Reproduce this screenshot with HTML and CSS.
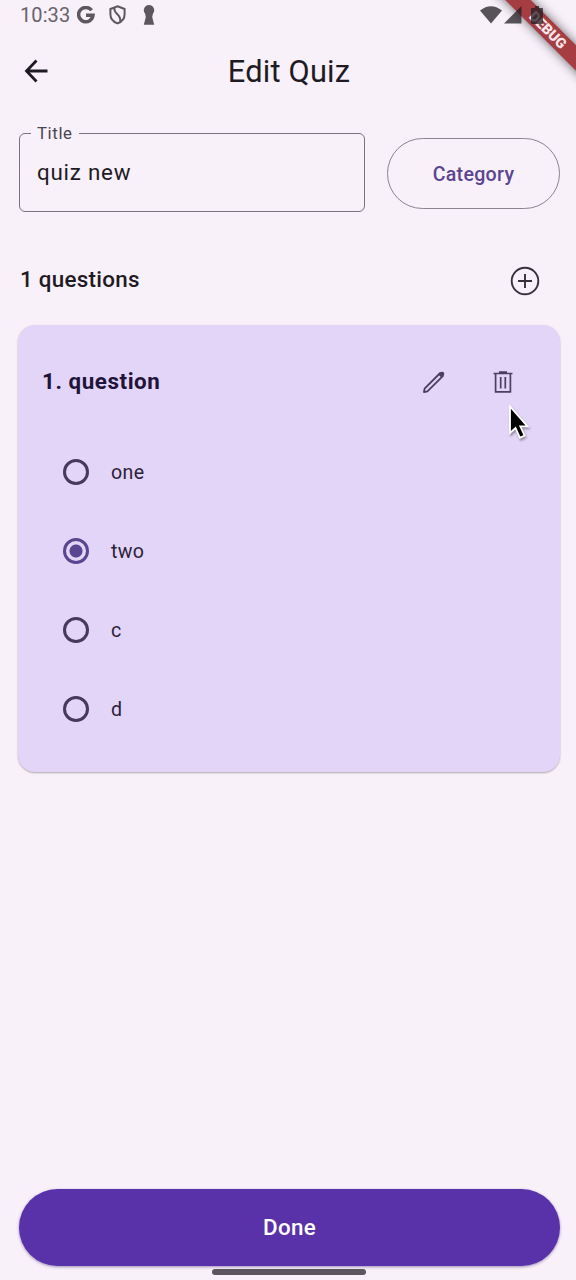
FILE: index.html
```html
<!DOCTYPE html>
<html lang="en">
<head>
<meta charset="utf-8">
<title>Edit Quiz</title>
<link rel="stylesheet" href="styles.css">
</head>
<body>
<div class="screen">
  <header class="status">
    <div class="status-left">
      <span class="clock">10:33</span>
      <svg class="google" width="18" height="18" viewBox="0 0 18 18"><path d="M14.6 4.300A7.200 7.200 0 1 0 16 9.200H9" fill="none" stroke="currentColor" stroke-width="3.500"/></svg>
      <svg class="shield" width="17" height="20" viewBox="0 0 17 20"><path d="M8.500 1.300 15.600 4v5.200c0 4-2.700 7.600-7.100 9.200-4.400-1.600-7.100-5.200-7.100-9.200V4ZM5.400 3C4.400 9.500 12.500 8.500 11.200 16.500" fill="none" stroke="currentColor" stroke-width="2"/></svg>
      <svg class="keyhole" width="12" height="20" viewBox="0 0 12 20"><path d="M6 0a5.200 5.200 0 0 1 4 8.500L9.200 12l2 7.800H.8l2-7.800L2 8.500A5.200 5.200 0 0 1 6 0Z" fill="currentColor"/></svg>
    </div>
    <div class="status-right">
      <svg width="22" height="18" viewBox="0 0 22 18"><path d="M0 4.500Q11-4 22 4.500L11 17.500Z" fill="currentColor"/></svg>
      <svg width="18" height="18" viewBox="0 0 18 18"><path d="M17.500 0v17.500H0Z" fill="currentColor"/></svg>
      <svg class="battery" width="12" height="18" viewBox="0 0 12 18"><path d="M4 0h4v2h3q1 0 1 1v14q0 1-1 1H1q-1 0-1-1V3q0-1 1-1h3Z" fill="currentColor"/></svg>
    </div>
  </header>
  <div class="debug-clip"><div class="debug">DEBUG</div></div>

  <div class="appbar">
    <svg class="back" width="24" height="24" viewBox="0 0 24 24"><path d="M12.500 1.500 2.500 12l10 10.500M2.500 12h21" fill="none" stroke="currentColor" stroke-width="2.800"/></svg>
    <h1 class="heading">Edit Quiz</h1>
  </div>

  <div class="form-row">
    <fieldset class="field">
      <legend class="field-label">Title</legend>
      <span class="field-value">quiz new</span>
    </fieldset>
    <button class="category">Category</button>
  </div>

  <div class="count-row">
    <h2 class="count">1 questions</h2>
    <svg width="30" height="30" viewBox="0 0 30 30"><path d="M15 8v14M8 15h14" stroke="currentColor" stroke-width="1.900"/><circle cx="15" cy="15" r="13.300" fill="none" stroke="currentColor" stroke-width="1.900"/></svg>
  </div>

  <section class="card">
    <div class="card-head">
      <h3 class="question">1. question</h3>
      <svg class="edit" width="24" height="24" viewBox="0 0 24 24"><path d="M2 22 2.600 18.600 18.200 3 21 5.800 5.400 21.400Z" fill="none" stroke="currentColor" stroke-width="1.800" stroke-linejoin="round"/><path d="m16.300 4.500 2.300-2.200c2.100-2 5.100 1 3 3l-2.300 2.300Z" fill="currentColor"/></svg>
      <svg class="trash" width="20" height="22" viewBox="0 0 20 22"><path d="M.5 2.500h19M6 1.200h8M2.600 2.500v18.300h14.800V2.500M7.700 6v11.500M12.300 6v11.500" fill="none" stroke="currentColor" stroke-width="1.700"/></svg>
    </div>
    <ul class="options">
      <li class="option"><span class="radio"></span><span class="option-text">one</span></li>
      <li class="option"><span class="radio radio-on"></span><span class="option-text">two</span></li>
      <li class="option"><span class="radio"></span><span class="option-text">c</span></li>
      <li class="option"><span class="radio"></span><span class="option-text">d</span></li>
    </ul>
  </section>

  <footer class="footer">
    <button class="done">Done</button>
    <div class="nav-handle"></div>
  </footer>

  <svg class="cursor" width="26" height="36" viewBox="0 0 26 36"><path d="M2 1.500v26.500l5.500-5 4.300 9.700 4.700-2.200-4.200-9.200h7.200Z" fill="#000" stroke="#fff" stroke-width="1.800"/></svg>
</div>
</body>
</html>
```
FILE: styles.css
```css
* { box-sizing: border-box; }
body { margin: 0; }
h1, h2, h3, ul { margin: 0; padding: 0; }
svg { display: block; flex: none; }
button { font-family: inherit; padding: 0; }

.screen {
  position: relative;
  display: flex;
  flex-direction: column;
  width: 576px;
  height: 1280px;
  overflow: hidden;
  background: #f8f1fa;
  color: #1f1b24;
  font-family: Roboto, "Liberation Sans", sans-serif;
}

.status {
  position: relative;
  z-index: 3;
  display: flex;
  justify-content: space-between;
  height: 34px;
  padding: 0 33px 0 20px;
  color: #5d575e;
}
.status-left, .status-right { display: flex; align-items: center; height: 30px; }
.clock { width: 57px; font-size: 20px; letter-spacing: 0.1px; color: #69636b; }
.shield { margin-left: 14px; }
.keyhole { margin-left: 17px; }
.status-right { gap: 2px; height: 29px; color: rgba(35, 29, 35, 0.75); }
.battery { margin-left: 7px; }

.debug-clip {
  position: absolute;
  z-index: 2;
  top: 0;
  right: 0;
  width: 120px;
  height: 120px;
  overflow: hidden;
}
.debug {
  position: absolute;
  left: 2px;
  top: 21px;
  width: 180px;
  height: 18px;
  transform: rotate(45deg);
  background: #a53d43;
  box-shadow: 0 0 11px rgba(0, 0, 0, 0.6);
  color: #f6e6ea;
  font-size: 14.300px;
  font-weight: 900;
  line-height: 18px;
  text-align: center;
}

.appbar {
  display: grid;
  grid-template-columns: 24px 1fr 24px;
  align-items: center;
  height: 76px;
  padding: 0 22px 2px 24px;
}
.heading { font-size: 30.800px; font-weight: 400; letter-spacing: 0.200px; text-align: center; }

.form-row {
  display: flex;
  gap: 22px;
  padding: 14px 16px 0 19px;
}
.field {
  width: 346px;
  height: 89px;
  margin: -1px 0 0;
  padding: 0 17px;
  border: 1.500px solid #7a737e;
  border-radius: 6px;
}
.field-label {
  margin-left: -6px;
  padding: 0 6px;
  font-size: 16.800px;
  line-height: 20px;
  letter-spacing: 0.600px;
  color: #4b4550;
}
.field-value { display: block; margin-top: 16px; font-size: 22.400px; line-height: 26px; letter-spacing: 0.750px; }
.category {
  width: 173px;
  height: 71px;
  margin-top: 14px;
  padding-top: 1px;
  border: 1px solid #8c8590;
  border-radius: 36px;
  background: transparent;
  color: #5b4590;
  font-size: 19.600px;
  font-weight: 500;
  letter-spacing: 0.300px;
}

.count-row {
  display: flex;
  align-items: center;
  justify-content: space-between;
  height: 113px;
  padding: 24px 36px 0 20px;
  color: #37313b;
}
.count { padding-bottom: 4px; color: #1f1b24; font-size: 22.400px; font-weight: 500; letter-spacing: 0.280px; }

.card {
  width: 542px;
  height: 447px;
  margin-left: 18px;
  padding: 34px 24px 0;
  border-radius: 17px;
  background: #e3d5f8;
  box-shadow: 0 1px 2px rgba(0, 0, 0, 0.3);
}
.card-head { display: flex; align-items: center; height: 44px; color: #4b3f60; }
.question { flex: 1; color: #21143b; font-size: 22.400px; font-weight: 700; letter-spacing: 0.550px; }
.edit, .trash { margin-top: 1px; }
.trash { margin-right: 23px; margin-left: 47px; }
.options { padding: 29px 0 0 21px; list-style: none; }
.option { display: flex; align-items: center; gap: 22px; height: 79px; color: #2c2238; font-size: 19.600px; letter-spacing: 0.350px; }
.option-text { padding-top: 2px; }
.radio { width: 26px; height: 26px; border: 3px solid #48385c; border-radius: 50%; }
.radio-on { border-color: #5b4590; background: radial-gradient(circle, #5b4590 6px, transparent 7px); }

.footer { margin-top: auto; padding: 0 16px 5px 19px; }
.done {
  display: block;
  width: 541px;
  height: 77px;
  padding-bottom: 2px;
  border: 0;
  border-radius: 39px;
  background: #5931a9;
  box-shadow: 0 1px 3px rgba(50, 20, 100, 0.45);
  color: #fff;
  font-size: 22.400px;
  font-weight: 500;
  letter-spacing: 0.250px;
}
.nav-handle { width: 154px; height: 6px; margin: 3px 0 0 193px; border-radius: 3px; background: #5b555f; }

.cursor {
  position: absolute;
  z-index: 4;
  left: 508px;
  top: 405px;
  filter: drop-shadow(1px 2px 1px rgba(0, 0, 0, 0.35));
}
```
